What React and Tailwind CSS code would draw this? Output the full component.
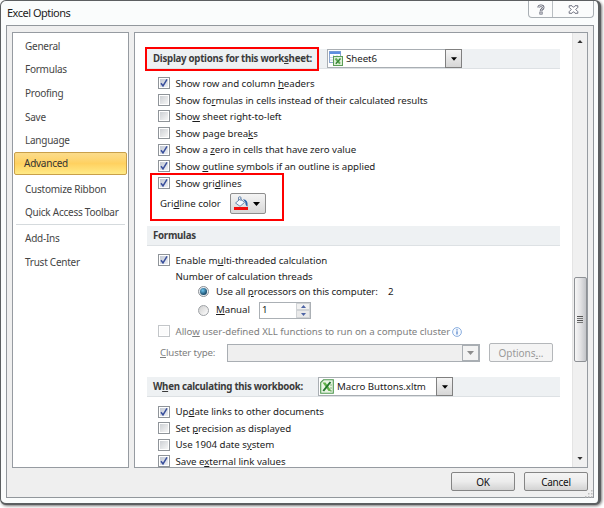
import React from "react";

const U = ({ children }) => (
  <span className="underline decoration-1 underline-offset-[1px]">{children}</span>
);

function Check({ on, disabled }) {
  return (
    <span
      className={
        "block h-3 w-3 shrink-0 border p-px " +
        (disabled ? "border-[#c3c6c9] bg-white" : "border-[#8f9499] bg-white")
      }
    >
      <span
        className={
          "block h-2 w-2 " +
          (disabled
            ? "bg-[#fbfbfb]"
            : on
              ? "bg-gradient-to-br from-[#c3c9d4] to-[#eef0f4]"
              : "bg-gradient-to-br from-[#cdd0d4] to-[#f6f6f6]")
        }
      >
        {on && (
          <svg viewBox="0 0 8 8" className="h-2 w-2 overflow-visible">
            <path d="M1 4.2 L3 7 L7 0.4" fill="none" stroke="#394f9c" strokeWidth="1.5" />
          </svg>
        )}
      </span>
    </span>
  );
}

function CheckRow({ on, disabled, children }) {
  return (
    <div className="flex h-[16.6px] items-center pl-[11px]">
      <Check on={on} disabled={disabled} />
      <span
        className={
          "ml-[5.5px] flex items-center whitespace-pre pt-px " +
          (disabled ? "text-[#7e7e7e]" : "")
        }
      >
        {children}
      </span>
    </div>
  );
}

function Arrow({ className }) {
  return (
    <svg viewBox="0 0 7 4" className={className || "h-1 w-[7px] fill-black"}>
      <path d="M0 0H7L3.5 4Z" />
    </svg>
  );
}

function Combo({ icon, label }) {
  return (
    <div className="flex h-[19px] w-[135px] border border-[#a9aeb3] bg-white">
      <div className="flex flex-1 items-center gap-[3px] whitespace-nowrap pl-px font-normal text-[#1c1c1c]">
        {icon}
        <span>{label}</span>
      </div>
      <div className="-my-px -mr-px flex w-[17px] items-center justify-center border border-[#808080] bg-gradient-to-b from-[#f5f5f5] to-[#d6d6d6]">
        <Arrow className="h-1 w-[6px] fill-black" />
      </div>
    </div>
  );
}

const SheetIcon = (
  <svg viewBox="0 0 14 15" className="h-[15px] w-[14px] shrink-0">
    <rect x="0.5" y="0.5" width="11" height="11" fill="#fff" stroke="#8ba6cf" />
    <rect x="0.5" y="0.5" width="11" height="2.5" fill="#5f8fe0" />
    <path d="M1 6.5H11M1 9H11M4.5 4V11M8 4V11" stroke="#c5d3ea" />
    <rect x="4.5" y="5.5" width="9" height="9" fill="#dcefd6" stroke="#5b9d55" />
    <path d="M6.5 7.5L11 12.7" stroke="#62ab55" strokeWidth="2" />
    <path d="M11.5 7.5L6.8 12.7" stroke="#348435" strokeWidth="1.4" />
  </svg>
);

const BookIcon = (
  <svg viewBox="0 0 14 15" className="h-[15px] w-[14px] shrink-0">
    <path d="M3.5 0.8H13.3V14.2H0.7V3.5Z" fill="#e9f5e4" stroke="#4f9850" strokeWidth="1.1" />
    <path d="M2.5 3.5H5.5L11.5 12H8.5Z" fill="#62b44b" />
    <path d="M10.5 3L3.3 12" stroke="#22752b" strokeWidth="2" />
    <path d="M10 9H12M10 12H12M10 6H12" stroke="#84b47c" />
  </svg>
);

const navItem = "flex h-[23.6px] shrink-0 items-center whitespace-nowrap pl-3";

function Nav() {
  return (
    <nav className="flex w-[117px] flex-col border border-[#969ba1] bg-white pt-px text-[10px] tracking-[-0.25px] text-[#454545]">
      <div className={navItem}>General</div>
      <div className={navItem}>Formulas</div>
      <div className={navItem}>Proofing</div>
      <div className={navItem}>Save</div>
      <div className={navItem}>Language</div>
      <div className="mx-px flex h-[23px] shrink-0 items-center rounded-[2px] border border-[#c9a04a] bg-gradient-to-b from-[#fbdc8b] via-[#ffd160] to-[#ffea86] pl-[9px] text-[#333]">
        Advanced
      </div>
      <div className={navItem + " mt-[2px]"}>Customize Ribbon</div>
      <div className={navItem}>Quick Access Toolbar</div>
      <div className="mx-[3px] h-px shrink-0 bg-[#d5dadd]" />
      <div className={navItem + " mt-px"}>Add-Ins</div>
      <div className={navItem}>Trust Center</div>
    </nav>
  );
}

function Band({ title, gap, children }) {
  return (
    <div className="flex h-5 items-center border-b border-[#dde1e4] bg-[#eef1f3] pl-[6px] font-bold text-[#3b3b3b]">
      <span className={"shrink-0 whitespace-pre tracking-[-0.27px] " + (gap || "")}>{title}</span>
      {children}
    </div>
  );
}

function DialogButton({ children }) {
  return (
    <button className="h-[19px] w-16 rounded-[2px] border border-[#858585] bg-gradient-to-b from-[#f4f4f4] via-[#ececec] to-[#d3d3d3] text-[10px] tracking-[-0.25px] text-[#111]">
      {children}
    </button>
  );
}

function Content() {
  return (
    <main className="flex h-[436px] w-[454px] overflow-hidden border border-[#969ba1] bg-white text-[9.7px] tracking-[-0.04px] text-[#1c1c1c]">
      <div className="ml-3 w-[413px] shrink-0 pt-4">
        <Band
          gap="w-[174px]"
          title={<>Display options for this work<U>s</U>heet:</>}
        >
          <Combo icon={SheetIcon} label="Sheet6" />
        </Band>
        <div className="pt-[6px]">
          <CheckRow on><span>Show row and column <U>h</U>eaders</span></CheckRow>
          <CheckRow><span>Show fo<U>r</U>mulas in cells instead of their calculated results</span></CheckRow>
          <CheckRow><span>Sho<U>w</U> sheet right-to-left</span></CheckRow>
          <CheckRow><span>Show page brea<U>k</U>s</span></CheckRow>
          <CheckRow on><span>Show a <U>z</U>ero in cells that have zero value</span></CheckRow>
          <CheckRow on><span>Show <U>o</U>utline symbols if an outline is applied</span></CheckRow>
          <CheckRow on><span>Show gri<U>d</U>lines</span></CheckRow>
        </div>
        <div className="mt-[2px] flex h-[21px] items-center pl-[13px]">
          <span className="w-[70px] whitespace-pre">Gri<U>d</U>line color</span>
          <div className="flex h-[21px] w-9 items-center justify-between rounded-[2px] border border-[#8e8e8e] bg-gradient-to-b from-[#f4f4f4] to-[#d8d8d8] pl-[3px] pr-[5px]">
            <svg viewBox="0 0 15 15" className="h-[15px] w-[15px]">
              <rect x="0" y="11" width="14" height="3" fill="#f20d0d" />
              <path d="M1.5 7L6.5 2.8L10.5 6.5L6 10.3Z" fill="#f5f9fd" stroke="#6d8bb0" />
              <path d="M4.5 5V2Q4.5 0.7 5.8 0.7T7 2V5" fill="none" stroke="#6d8bb0" />
              <path d="M9 3.2Q14.4 3.4 13.6 10.4Q11.2 9.8 11.4 6.5Z" fill="#2f66ac" />
            </svg>
            <Arrow />
          </div>
        </div>
        <div className="mt-[12px]">
          <Band title="Formulas" />
        </div>
        <div className="pt-[6px]">
          <CheckRow on><span>Enable m<U>u</U>lti-threaded calculation</span></CheckRow>
        </div>
        <div className="flex h-[15px] items-center pl-[28.5px] pt-px">Number of calculation threads</div>
        <div className="flex h-[15px] items-center pl-[51px]">
          <span className="flex h-[11px] w-[11px] items-center justify-center rounded-full border border-[#8d9196] bg-[#e8edf2]">
            <span className="h-[7px] w-[7px] rounded-full bg-[radial-gradient(circle_at_40%_35%,#6fc5ef,#10405f_75%)]" />
          </span>
          <span className="ml-[7px] w-[172px] whitespace-pre pt-px tracking-[-0.1px]">Use all <U>p</U>rocessors on this computer:</span>
          <span className="pt-px">2</span>
        </div>
        <div className="mt-[2px] flex h-[19px] items-center pl-[51px]">
          <span className="h-[11px] w-[11px] rounded-full border border-[#9ea2a6] bg-gradient-to-br from-[#cfcfcf] to-white" />
          <span className="ml-[7px] w-[43px]"><U>M</U>anual</span>
          <div className="flex h-[17px] w-[52px] items-center justify-between border border-[#abb0b5] bg-white pl-[2px]">
            <span>1</span>
            <div className="flex h-[15px] w-[14px] flex-col">
              <span className="flex flex-1 items-center justify-center border border-[#d0d3d6] bg-[#f1f1f1]">
                <Arrow className="h-[3px] w-[5px] rotate-180 fill-[#4d64a5]" />
              </span>
              <span className="flex flex-1 items-center justify-center border border-[#d0d3d6] bg-[#e9e9e9]">
                <Arrow className="h-[3px] w-[5px] fill-[#4d64a5]" />
              </span>
            </div>
          </div>
        </div>
        <div className="mt-[3px]">
          <CheckRow disabled>
            <span>Allo<U>w</U> user-defined XLL functions to run on a compute cluster</span>
            <svg viewBox="0 0 10 10" className="ml-[2px] h-[10px] w-[10px]">
              <circle cx="5" cy="5" r="4.4" fill="#f6faff" stroke="#7fa6db" strokeWidth="0.9" />
              <path d="M5 4.3V7.6M5 2.3V3.5" stroke="#3f74c4" strokeWidth="1.1" />
            </svg>
          </CheckRow>
        </div>
        <div className="mt-[4px] flex h-[19px] items-center pl-[13px] text-[#7e7e7e]">
          <span className="w-[67px] tracking-[-0.15px]"><U>C</U>luster type:</span>
          <div className="flex h-[18px] w-[253px] justify-end border border-[#a9aeb3] bg-[#efefef]">
            <div className="flex w-[17px] items-center justify-center border border-[#a9aeb3] bg-[#f3f3f3]">
              <Arrow className="h-1 w-[7px] fill-[#8d8d8d]" />
            </div>
          </div>
          <div className="ml-[9px] flex h-[19px] w-16 items-center justify-center rounded-[2px] border border-[#b4b7ba] bg-[#f4f4f4] text-[10px] text-[#9a9a9a]">
            <span>Options<U>.</U>..</span>
          </div>
        </div>
        <div className="mt-[15px]">
          <Band
            gap="w-[165px]"
            title={<>W<U>h</U>en calculating this workbook:</>}
          >
            <Combo icon={BookIcon} label="Macro Buttons.xltm" />
          </Band>
        </div>
        <div className="pt-[6px]">
          <CheckRow on><span>Up<U>d</U>ate links to other documents</span></CheckRow>
          <CheckRow><span>Set <U>p</U>recision as displayed</span></CheckRow>
          <CheckRow><span>Use 1904 date s<U>y</U>stem</span></CheckRow>
          <CheckRow on><span>Save e<U>x</U>ternal link values</span></CheckRow>
        </div>
      </div>
      <div className="ml-auto flex w-[15px] flex-col items-center border-l border-[#e4e4e4] bg-[#f0f0f0]">
        <Arrow className="mt-[7px] h-[3px] w-[6px] rotate-180 fill-[#333]" />
        <div className="mt-[234px] flex h-[85px] w-[13px] shrink-0 flex-col items-center justify-center gap-px rounded-[2px] border border-[#8e9195] bg-gradient-to-r from-[#f6f6f6] via-[#e2e2e4] to-[#c3c5c9]">
          <span className="h-px w-[6px] bg-[#555]" />
          <span className="h-px w-[6px] bg-[#777]" />
          <span className="h-px w-[6px] bg-[#555]" />
          <span className="h-px w-[6px] bg-[#777]" />
        </div>
        <Arrow className="mb-[7px] mt-auto h-[3px] w-[6px] fill-[#333]" />
      </div>
    </main>
  );
}

export default function App() {
  return (
    <div className="relative h-[508px] w-[604px] overflow-hidden bg-white font-['Noto_Sans','Open_Sans',sans-serif] leading-none">
      <div className="flex h-[505px] w-[601px] flex-col rounded-[6px] border-b-2 border-l border-r-[3px] border-t border-[#5c5f61] bg-[#fafcfc] shadow-[1px_1px_3px_#777]">
        <header className="flex h-6 shrink-0 justify-between pl-[6px]">
          <span className="pt-[6px] text-[11px] leading-[12px] tracking-[-0.5px] text-[#1d1d1d]">Excel Options</span>
          <div className="mr-1 flex h-[17px] w-[66px] rounded-b-[4px] border border-t-0 border-[#a9afb4] bg-[#fbfcfc]">
            <div className="flex w-6 items-center justify-center border-r border-[#b9bec2]">
              <svg viewBox="0 0 9 12" className="h-[11px] w-2">
                <path d="M1.8 3.8Q1.8 1.8 4.4 1.8T7 3.8Q7 5 5.5 5.8Q4.5 6.4 4.5 7.8" fill="none" stroke="#5d6070" strokeWidth="2.8" />
                <path d="M1.8 3.6Q1.8 1.8 4.4 1.8T7 3.8Q7 5 5.5 5.8Q4.5 6.4 4.5 7.4" fill="none" stroke="#fff" strokeWidth="1.1" />
                <rect x="3.2" y="8.8" width="2.6" height="2.4" fill="#fff" stroke="#5d6070" strokeWidth="0.9" />
              </svg>
            </div>
            <div className="flex flex-1 items-center justify-center">
              <svg viewBox="0 0 11 10" className="h-[9px] w-[11px]">
                <path d="M0.7 0.8H3.8L5.5 2.6L7.2 0.8H10.3V2.6L8 5L10.3 7.4V9.2H7.2L5.5 7.4L3.8 9.2H0.7V7.4L3 5L0.7 2.6Z" fill="#fff" stroke="#5d6070" />
              </svg>
            </div>
          </div>
        </header>
        <div className="ml-[5px] flex h-[473px] w-[588px] flex-col border border-[#92979c] bg-[#efefef] pl-[5px] pt-[6px]">
          <div className="flex h-[436px] gap-[5px]">
            <Nav />
            <Content />
          </div>
          <footer className="relative flex justify-end gap-[9px] pr-[5px] pt-1">
            <DialogButton>OK</DialogButton>
            <DialogButton>Cancel</DialogButton>
            <svg viewBox="0 0 8 8" className="absolute -bottom-[7px] right-0 h-2 w-2 fill-[#bdbdbd]">
              <path d="M6 0h1.5v1.5H6zM6 3h1.5v1.5H6zM3 3h1.5v1.5H3zM6 6h1.5v1.5H6zM3 6h1.5v1.5H3zM0 6h1.5v1.5H0z" />
            </svg>
          </footer>
        </div>
      </div>
      <div className="pointer-events-none absolute left-[145px] top-[47px] h-6 w-[174px] border-2 border-[#fe0000]" />
      <div className="pointer-events-none absolute left-[150px] top-[173px] h-12 w-[134px] border-2 border-[#fe0000]" />
    </div>
  );
}
